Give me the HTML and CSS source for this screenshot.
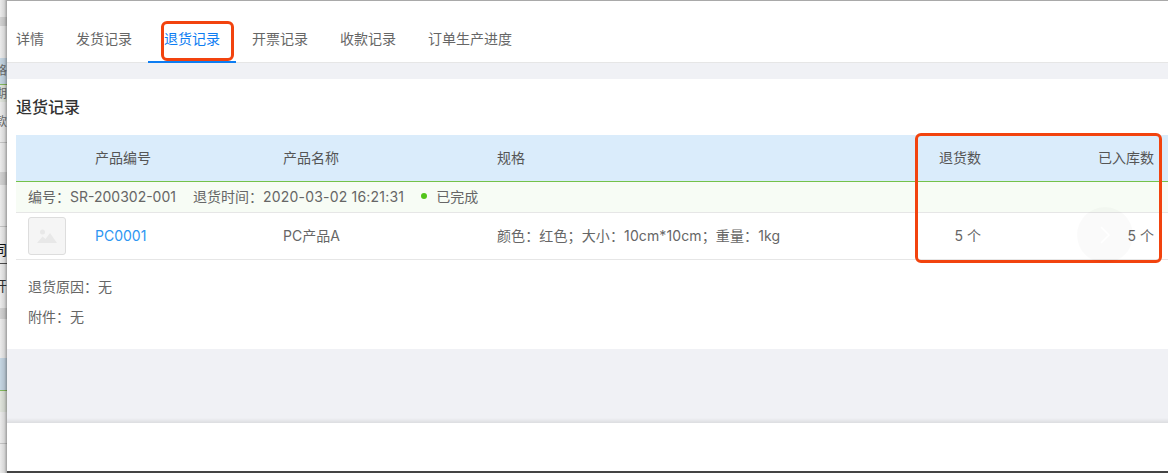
FILE: index.html
```html
<!DOCTYPE html>
<html lang="zh-CN">
<head>
<meta charset="utf-8">
<title>退货记录</title>
<link rel="stylesheet" href="styles.css">
</head>
<body>
<div class="page">
  <aside class="backdrop">
    <div class="bk" style="height:17px"></div>
    <div class="bk bk-grey" style="height:9px"></div>
    <div class="bk" style="height:32px"></div>
    <div class="bk bk-blue" style="height:26px"><span>格</span></div>
    <div class="bk bk-green" style="height:18px"><span>期</span></div>
    <div class="bk bk-line" style="height:41px"><span>款</span></div>
    <div class="bk" style="height:29px"></div>
    <div class="bk bk-grey" style="height:13px"></div>
    <div class="bk bk-line" style="height:42px"></div>
    <div class="bk bk-dark" style="height:37px"><span>同</span></div>
    <div class="bk bk-plain" style="height:44px"><span>开</span></div>
    <div class="bk bk-grey" style="height:11px"></div>
    <div class="bk" style="height:39px"></div>
    <div class="bk bk-blue2" style="height:32px"></div>
    <div class="bk bk-green" style="height:22px"></div>
    <div class="bk bk-line" style="height:32px"></div>
    <div class="bk" style="height:28px"></div>
  </aside>
  <main class="panel">
    <nav class="tabs">
      <a class="tab tab-first">详情</a>
      <a class="tab">发货记录</a>
      <a class="tab tab-active">退货记录</a>
      <a class="tab">开票记录</a>
      <a class="tab">收款记录</a>
      <a class="tab">订单生产进度</a>
    </nav>
    <div class="gap"></div>
    <section class="card">
      <h2 class="card-title">退货记录</h2>
      <div class="table">
        <div class="grid head">
          <span></span>
          <span>产品编号</span>
          <span>产品名称</span>
          <span>规格</span>
          <span class="end">退货数</span>
          <span class="end">已入库数</span>
        </div>
        <div class="sub">
          <span>编号：SR-200302-001</span>
          <span>退货时间：<span class="num">2020-03-02 16:21:31</span></span>
          <span class="status"><i class="dot"></i>已完成</span>
        </div>
        <div class="grid row">
          <span class="thumb">
            <svg width="20" height="14" viewBox="0 0 20 14"><circle cx="5.500" cy="3" r="2.500" fill="#e8e8e8"/><path d="M0 14 L5.500 7.500 L8.500 10 L13 4 L20 14 Z" fill="#e8e8e8"/></svg>
          </span>
          <a class="link">PC0001</a>
          <span>PC产品A</span>
          <span class="spec">颜色：红色；大小：10cm*10cm；重量：1kg</span>
          <span class="end">5 个</span>
          <span class="end">5 个</span>
        </div>
      </div>
      <div class="notes">
        <p>退货原因：无</p>
        <p>附件：无</p>
      </div>
    </section>
    <div class="rest"></div>
    <footer class="foot"></footer>
  </main>
  <div class="mark mark-tab"></div>
  <div class="mark mark-cols"></div>
  <div class="float">
    <svg width="10" height="18" viewBox="0 0 10 18"><path d="M1 1 L9 9 L1 17" fill="none" stroke="#ffffff" stroke-width="1.500"/></svg>
  </div>
</div>
</body>
</html>
```
FILE: styles.css
```css
* { box-sizing: border-box; }
html, body { margin: 0; padding: 0; }
body {
  font-family: "Inter", "Noto Sans CJK SC", sans-serif;
  font-size: 14px;
  color: #666;
  background: #fff;
}
.page {
  position: relative;
  display: flex;
  width: 1168px;
  height: 473px;
  overflow: hidden;
}
.backdrop {
  position: relative;
  flex: 0 0 7px;
  display: flex;
  flex-direction: column;
  overflow: hidden;
  background: #fff;
}
.backdrop::after {
  content: "";
  position: absolute;
  inset: 0;
  background: linear-gradient(to right, rgba(0,0,0,.08), rgba(0,0,0,.16) 60%, rgba(0,0,0,.38));
}
.bk {
  flex: none;
  display: flex;
  justify-content: flex-end;
  align-items: center;
  font-size: 12px;
  line-height: 14px;
  color: #777;
  white-space: nowrap;
}
.bk span { flex: none; }
.bk-grey { background: #e4e4e4; }
.bk-blue { background: #d6e8f6; }
.bk-blue2 { background: #d6e8f6; }
.bk-green { background: #f3f8ef; border-top: 1px solid #8fca63; }
.bk-line { border-bottom: 1px solid #d6d6d6; }
.bk-dark { border-bottom: 1px solid #555; color: #111; font-size: 14px; align-items: flex-start; padding-top: 16px; }
.bk-plain { color: #333; font-size: 14px; }
.panel {
  flex: 1;
  min-width: 0;
  display: flex;
  flex-direction: column;
  background: #f0f1f5;
  border-top: 1px solid #a9a9a9;
  border-bottom: 2px solid #444;
}
.tabs {
  flex: none;
  height: 62px;
  padding-left: 9px;
  display: flex;
  background: #fff;
  border-bottom: 1px solid #e6e6e6;
}
.tab {
  height: 62px;
  padding: 30px 16px 0;
  line-height: 16px;
  color: #666;
}
.tab-first { padding-left: 0; }
.tab-active {
  color: #0d7df2;
  border-bottom: 2px solid #0d7df2;
}
.gap { flex: none; height: 16px; }
.card {
  flex: none;
  height: 270px;
  padding: 0 0 0 9px;
  background: #fff;
}
.card-title {
  margin: 0;
  height: 56px;
  padding-top: 18px;
  font-size: 16px;
  line-height: 20px;
  font-weight: 500;
  color: #333;
}
.grid {
  display: grid;
  grid-template-columns: 79px 188px 214px 1fr 42px 173px;
  padding-right: 14px;
  align-items: center;
}
.end { text-align: right; white-space: nowrap; }
.head {
  height: 47px;
  padding-bottom: 2px;
  background: #daecfb;
  border-bottom: 1px solid #74c24a;
  color: #555;
}
.sub {
  height: 31px;
  padding-left: 12px;
  padding-bottom: 2px;
  display: flex;
  align-items: center;
  gap: 17px;
  background: #f7fcf5;
  border-bottom: 1px solid #e6e6e6;
}
.num { letter-spacing: .2px; }
.status { display: flex; align-items: center; }
.dot {
  width: 6px;
  height: 6px;
  margin-right: 9px;
  border-radius: 50%;
  background: #52c41a;
}
.row {
  height: 47px;
  border-bottom: 1px solid #e6e6e6;
}
.row > :not(.thumb) { margin-bottom: 2px; }
.spec { letter-spacing: .12px; white-space: nowrap; }
.thumb {
  width: 38px;
  height: 38px;
  margin-left: 12px;
  display: flex;
  align-items: center;
  justify-content: center;
  background: #f5f5f5;
  border: 1px solid #ddd;
  border-radius: 3px;
}
.link { color: #2d96f2; }
.notes { padding: 12px 0 0 12px; }
.notes p { margin: 0; line-height: 30px; }
.rest {
  flex: 1;
  background: linear-gradient(to bottom, #f0f1f5 calc(100% - 5px), #dcdde0);
}
.foot { flex: none; height: 48px; background: #fff; }
.mark {
  position: absolute;
  border: 3px solid #f2430e;
  border-radius: 6px;
}
.mark-tab { left: 161px; top: 21px; width: 73px; height: 40px; }
.mark-cols { left: 915px; top: 133px; width: 247px; height: 130px; }
.float {
  position: absolute;
  left: 1077px;
  top: 207px;
  width: 56px;
  height: 56px;
  border-radius: 50%;
  background: rgba(0,0,0,.018);
  display: flex;
  align-items: center;
  justify-content: center;
}
```
